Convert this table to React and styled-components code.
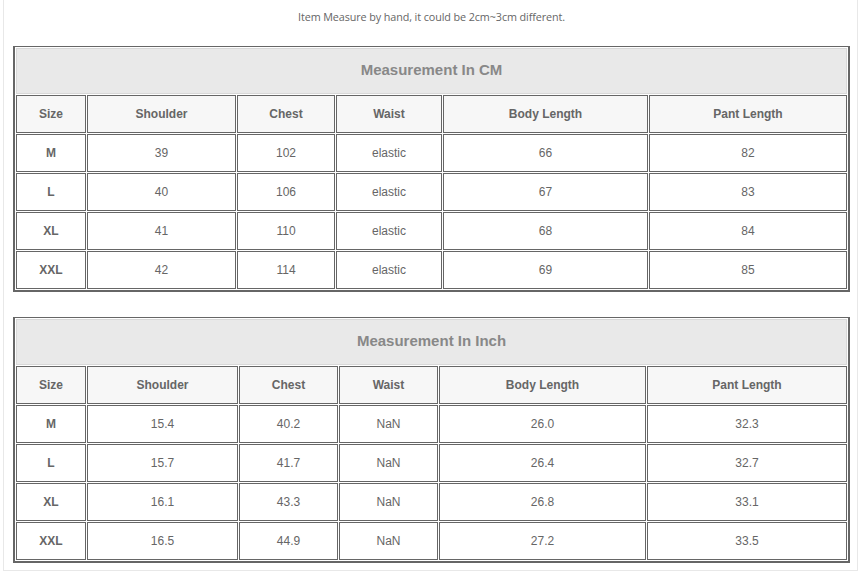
import React from "react";
import styled, { createGlobalStyle } from "styled-components";

const Global = createGlobalStyle`
  html, body { margin: 0; padding: 0; background: #fff; }
  body { font-family: "Liberation Sans", Arial, sans-serif; }
`;

const Frame = styled.div`
  box-sizing: border-box;
  width: 855px;
  margin-left: 3px;
  border: 1px solid #e8e8e8;
  border-top: none;
  padding: 0 7px 7px 9px;
`;

const Note = styled.p`
  margin: 0;
  height: 46px;
  padding-top: 9px;
  box-sizing: border-box;
  text-align: center;
  font-family: "Open Sans", sans-serif;
  font-size: 10.8px;
  letter-spacing: -0.1px;
  line-height: 16px;
  color: #666;
`;

const Table = styled.table`
  width: 837px;
  table-layout: fixed;
  border-collapse: separate;
  border-spacing: 1px;
  border: 2px solid #666;
  border-top-width: 1px;
  margin-top: ${(p) => p.$gap || 0}px;
  font-family: "Liberation Sans", Arial, sans-serif;
  color: #666;
`;

const Col = styled.col`
  width: ${(p) => p.$w}px;
`;

const TitleCell = styled.th`
  box-sizing: border-box;
  height: 46px;
  background: #e9e9e9;
  border: 1px solid #d8d8d8;
  font-size: 15px;
  font-weight: bold;
  color: #888;
  text-align: center;
  vertical-align: middle;
  padding: 0 0 3px;
`;

const HeadCell = styled.th`
  box-sizing: border-box;
  height: 38px;
  background: #f7f7f7;
  border: 1px solid #666;
  font-size: 12px;
  font-weight: bold;
  color: #666;
  text-align: center;
  padding: 0;
`;

const Cell = styled.td`
  box-sizing: border-box;
  height: 38px;
  background: #fff;
  border: 1px solid #666;
  font-size: 12px;
  font-weight: ${(p) => (p.$bold ? "bold" : "normal")};
  color: #666;
  text-align: center;
  padding: 0;
`;

const headers = ["Size", "Shoulder", "Chest", "Waist", "Body Length", "Pant Length"];

const cmRows = [
  ["M", "39", "102", "elastic", "66", "82"],
  ["L", "40", "106", "elastic", "67", "83"],
  ["XL", "41", "110", "elastic", "68", "84"],
  ["XXL", "42", "114", "elastic", "69", "85"],
];

const inchRows = [
  ["M", "15.4", "40.2", "NaN", "26.0", "32.3"],
  ["L", "15.7", "41.7", "NaN", "26.4", "32.7"],
  ["XL", "16.1", "43.3", "NaN", "26.8", "33.1"],
  ["XXL", "16.5", "44.9", "NaN", "27.2", "33.5"],
];

function SizeTable({ title, rows, widths, gap }) {
  return (
    <Table $gap={gap}>
      <colgroup>
        {widths.map((w, i) => (
          <Col key={i} $w={w} />
        ))}
      </colgroup>
      <tbody>
        <tr>
          <TitleCell colSpan={6}>{title}</TitleCell>
        </tr>
        <tr>
          {headers.map((h) => (
            <HeadCell key={h}>{h}</HeadCell>
          ))}
        </tr>
        {rows.map((r) => (
          <tr key={r[0]}>
            {r.map((v, i) => (
              <Cell key={i} $bold={i === 0}>
                {v}
              </Cell>
            ))}
          </tr>
        ))}
      </tbody>
    </Table>
  );
}

export default function App() {
  return (
    <>
      <Global />
      <Frame>
        <Note>Item Measure by hand, it could be 2cm~3cm different.</Note>
        <SizeTable
          title="Measurement In CM"
          rows={cmRows}
          widths={[70, 149, 98, 106, 205, 198]}
        />
        <SizeTable
          title="Measurement In Inch"
          rows={inchRows}
          widths={[70, 151, 99, 99, 207, 200]}
          gap={25}
        />
      </Frame>
    </>
  );
}
